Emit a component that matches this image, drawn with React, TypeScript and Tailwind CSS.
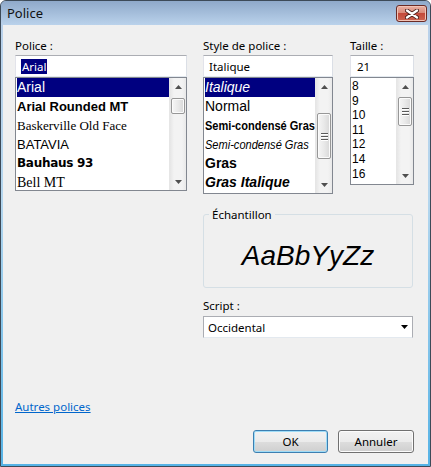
import React from "react";

const ui = "font-['Noto_Sans','Liberation_Sans',sans-serif] text-[11.5px] leading-[15px]";

function Arrow({ down }: { down?: boolean }) {
  return (
    <svg width="7" height="4" viewBox="0 0 7 4">
      <path d={down ? "M0 0H7L3.5 4Z" : "M0 4H7L3.5 0Z"} fill="#505050" />
    </svg>
  );
}

function ScrollBar({ thumb, grip }: { thumb: string; grip?: boolean }) {
  return (
    <div className="flex w-[17px] shrink-0 flex-col border-l border-[#e6e6e6] bg-[linear-gradient(to_right,#e6e6e6,#f3f3f3_25%,#f3f3f3_75%,#e9e9e9)]">
      <div className="flex h-[17px] shrink-0 items-center justify-center">
        <Arrow />
      </div>
      <div className="flex-1">
        <div
          className={`${thumb} mx-[1px] flex flex-col items-center justify-center gap-[2px] rounded-[2px] border border-[#979797] bg-[linear-gradient(to_right,#f6f6f6,#e9e9e9_50%,#d8d8d8)] shadow-[inset_0_0_0_1px_#fbfbfb]`}
        >
          {grip &&
            [0, 1, 2].map((i) => (
              <div key={i} className="h-[1px] w-[7px] bg-[#5a5a5a] shadow-[0_1px_0_#ffffff]" />
            ))}
        </div>
      </div>
      <div className="flex h-[17px] shrink-0 items-center justify-center">
        <Arrow down />
      </div>
    </div>
  );
}

const fonts = [
  { label: "Arial", cls: "font-['Liberation_Sans',sans-serif] text-[14px]" },
  { label: "Arial Rounded MT", cls: "font-['Liberation_Sans',sans-serif] text-[13px] font-bold" },
  { label: "Baskerville Old Face", cls: "font-['Liberation_Serif',serif] text-[13px]" },
  { label: "BATAVIA", cls: "font-['Liberation_Sans',sans-serif] text-[13px]" },
  { label: "Bauhaus 93", cls: "font-['DejaVu_Sans',sans-serif] text-[12px] font-black tracking-[-0.3px]" },
  { label: "Bell MT", cls: "font-['Liberation_Serif',serif] text-[14px]" },
];

const styles = [
  { label: "Italique", cls: "text-[14px] italic" },
  { label: "Normal", cls: "text-[14px]" },
  { label: "Semi-condensé Gras", cls: "inline-block origin-left scale-x-85 text-[13px] font-bold" },
  { label: "Semi-condensé Gras", cls: "inline-block origin-left scale-x-85 text-[13px] italic" },
  { label: "Gras", cls: "text-[14px] font-bold" },
  { label: "Gras Italique", cls: "text-[14px] font-bold italic" },
];

const sizes = ["8", "9", "10", "11", "12", "14", "16"];

function TextBox({ children }: { children: React.ReactNode }) {
  return (
    <div className="flex h-[22px] items-center border border-[#abadb3] border-b-[#e3e9ef] border-l-[#e2e3ea] border-r-[#dbdfe6] bg-white pl-[5px]">
      {children}
    </div>
  );
}

function Button({ label, focused }: { label: string; focused?: boolean }) {
  return (
    <button
      className={`flex h-[23px] items-center justify-center rounded-[3px] border bg-[linear-gradient(to_bottom,#f2f2f2_0%,#ebebeb_50%,#dddddd_51%,#cfcfcf_100%)] ${
        focused
          ? "w-[75px] border-[#3c7fb1] shadow-[inset_0_0_0_1px_#9fdcf7]"
          : "w-[76px] border-[#707070] shadow-[inset_0_0_0_1px_#fcfcfc]"
      }`}
    >
      {label}
    </button>
  );
}

export default function App() {
  return (
    <div className={`${ui} h-[467px] w-[431px] text-black`}>
      <div className="flex h-full flex-col overflow-hidden rounded-t-[6px] border border-[#3d4a58] bg-[linear-gradient(to_bottom,#90aacb_0px,#b9d1ea_25px,#b4d6ee_200px,#56b3e6_100%)]">
        {/* Title bar */}
        <div className="flex h-[24px] shrink-0 items-start justify-between bg-[linear-gradient(to_bottom,#8fa9ca,#bad2eb)]">
          <span className="ml-[6px] mt-[5px] text-[13px] leading-[15px] text-[#111]">Police</span>
          <div className="mr-[3px] mt-[4px] flex h-[17px] w-[31px] items-center justify-center rounded-[3px] border border-[#6b2b25] bg-[linear-gradient(to_bottom,#eab0a2_0%,#d98a7a_45%,#c4493a_50%,#cc6350_100%)] shadow-[inset_0_0_0_1px_#f2c3b6]">
            <svg width="14" height="10" viewBox="0 0 14 10">
              <path d="M2 1.5L12 8.5M12 1.5L2 8.5" stroke="#4a1f1b" strokeWidth="4" strokeLinecap="round" />
              <path d="M2 1.5L12 8.5M12 1.5L2 8.5" stroke="#ffffff" strokeWidth="2.3" strokeLinecap="round" />
            </svg>
          </div>
        </div>

        {/* Client area */}
        <div className="mx-[2px] mb-[2px] flex flex-1 flex-col bg-[#f0f0f0] pl-[12px] pr-[14px] pt-[13px] pb-[11px]">
          <div className="flex items-start">
            {/* Police */}
            <div className="flex w-[172px] flex-col">
              <span>Police :</span>
              <div className="mt-[2px]">
                <TextBox>
                  <span className="bg-[#000080] px-[1px] text-white">Arial</span>
                </TextBox>
              </div>
              <div className="flex h-[114px] border border-[#828790] bg-white">
                <div className="flex-1 overflow-hidden pl-[1px]">
                  {fonts.map((f, i) => (
                    <div
                      key={f.label}
                      className={`flex h-[19px] items-center whitespace-nowrap ${
                        i === 0 ? "bg-[#000080] text-white" : ""
                      }`}
                    >
                      <span className={`${f.cls} leading-[19px]`}>{f.label}</span>
                    </div>
                  ))}
                </div>
                <ScrollBar thumb="mt-[3px] h-[16px]" />
              </div>
            </div>

            {/* Style de police */}
            <div className="ml-[16px] flex w-[130px] flex-col">
              <span>Style de police :</span>
              <div className="mt-[2px]">
                <TextBox>Italique</TextBox>
              </div>
              <div className="flex h-[117px] border border-[#828790] bg-white">
                <div className="flex-1 overflow-hidden pl-[1px] font-['Liberation_Sans',sans-serif]">
                  {styles.map((s, i) => (
                    <div
                      key={i}
                      className={`flex h-[19px] items-center whitespace-nowrap ${
                        i === 0 ? "bg-[#000080] text-white" : ""
                      }`}
                    >
                      <span className={`${s.cls} leading-[19px]`}>{s.label}</span>
                    </div>
                  ))}
                </div>
                <ScrollBar thumb="mt-[18px] h-[46px]" grip />
              </div>
            </div>

            {/* Taille */}
            <div className="ml-[17px] flex w-[64px] flex-col">
              <span>Taille :</span>
              <div className="mt-[2px]">
                <TextBox>
                  <span className="pl-[1px]">21</span>
                </TextBox>
              </div>
              <div className="flex h-[108px] border border-[#828790] bg-white">
                <div className="flex-1 overflow-hidden pl-[1px] pt-[1px] font-['Liberation_Sans',sans-serif] text-[12px]">
                  {sizes.map((s) => (
                    <div key={s} className="h-[14.6px] leading-[14.6px]">
                      {s}
                    </div>
                  ))}
                </div>
                <ScrollBar thumb="mt-[2px] h-[29px]" grip />
              </div>
            </div>
          </div>

          {/* Sample + script */}
          <div className="ml-[188px] mt-[20px] flex w-[210px] flex-col">
            <div className="relative flex h-[74px] items-center justify-center rounded-[3px] border border-[#d5dfe5] pt-[10px]">
              <span className="absolute -top-[8px] left-[5px] bg-[#f0f0f0] px-[3px]">Échantillon</span>
              <span className="font-['Liberation_Sans',sans-serif] text-[28px] italic leading-normal">
                AaBbYyZz
              </span>
            </div>
            <span className="mt-[10px]">Script :</span>
            <div className="mt-[3px] flex h-[22px] items-center justify-between border border-[#abadb3] border-b-[#e3e9ef] bg-white pl-[4px] pr-[4px]">
              <span>Occidental</span>
              <svg width="7" height="4" viewBox="0 0 7 4">
                <path d="M0 0H7L3.5 4Z" fill="#000" />
              </svg>
            </div>
          </div>

          {/* Footer */}
          <div className="mt-auto flex flex-col">
            <a href="#" className="self-start text-[#0066cc] underline">
              Autres polices
            </a>
            <div className="mt-[16px] flex justify-end gap-[10px]">
              <Button label="OK" focused />
              <Button label="Annuler" />
            </div>
          </div>
        </div>
      </div>
    </div>
  );
}
